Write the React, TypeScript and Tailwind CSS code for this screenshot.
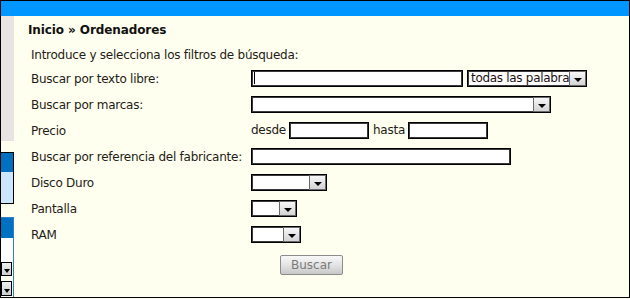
import React from "react";

const font = { fontFamily: '"DejaVu Sans", Tahoma, sans-serif' };

function Arrow() {
  return (
    <div className="h-full w-[17px] shrink-0 border border-[#6a6a6a] bg-gradient-to-b from-[#f7f7f7] to-[#d4d4d4] flex items-end justify-center pb-[3px]">
      <div className="w-0 h-0 border-l-[4px] border-r-[4px] border-t-[4px] border-l-transparent border-r-transparent border-t-black" />
    </div>
  );
}

function Select({ width, text }: { width: string; text?: string }) {
  return (
    <div className={`${width} h-[17px] bg-white border border-black shadow-[inset_0_0_0_1px_#3a3a3a] flex items-stretch`}>
      <div className="flex-1 min-w-0 whitespace-nowrap pl-[3px] leading-[15px] text-[12px] tracking-[-0.3px] text-[#221010]">
        {text}
      </div>
      <Arrow />
    </div>
  );
}

function TextBox({ width, caret }: { width: string; caret?: boolean }) {
  return (
    <div className={`${width} h-[17px] bg-white border border-black shadow-[inset_0_0_0_1px_#3a3a3a] flex items-center pl-[2px]`}>
      {caret && <div className="w-[1px] h-[12px] bg-black" />}
    </div>
  );
}

function Row({ label, children }: { label: string; children?: React.ReactNode }) {
  return (
    <div className="h-[26px] flex items-center">
      <div className="w-[237px] shrink-0 pl-[17px] pt-[1px]">{label}</div>
      <div className="flex items-center">{children}</div>
    </div>
  );
}

export default function App() {
  return (
    <div className="w-[630px] h-[299px] bg-[#fffff0]" style={font}>
      <div className="w-[630px] h-[298px] border border-black flex flex-col">
        <div className="h-[15px] bg-[#0096ff] shrink-0" />
        <div className="flex flex-1">
          {/* left sidebar fragment */}
          <div className="w-[13px] shrink-0 flex flex-col">
            <div className="h-[125px] bg-[#e8e4e4]" />
            <div className="h-[11px]" />
            <div className="h-[52px] border border-l-0 border-black flex flex-col">
              <div className="h-[19px] bg-[#0070c0]" />
              <div className="flex-1 bg-[#cce6fc]" />
            </div>
            <div className="h-[13px]" />
            <div className="flex-1 border-t border-r border-[#2f80c8] flex flex-col">
              <div className="h-[20px] bg-[#0070c0]" />
              <div className="h-[24px] bg-white" />
              <div className="h-[14px] w-[11px] border border-black bg-gradient-to-b from-[#f0f0f0] to-[#cfcfcf] flex items-end justify-center pb-[2px]">
                <div className="w-0 h-0 border-l-[3px] border-r-[3px] border-t-[4px] border-l-transparent border-r-transparent border-t-black" />
              </div>
              <div className="h-[5px]" />
              <div className="h-[15px] w-[11px] border border-black bg-gradient-to-b from-[#f0f0f0] to-[#cfcfcf] flex items-end justify-center pb-[2px]">
                <div className="w-0 h-0 border-l-[3px] border-r-[3px] border-t-[4px] border-l-transparent border-r-transparent border-t-black" />
              </div>
            </div>
          </div>

          {/* main panel */}
          <div className="flex-1 flex flex-col text-[12px] tracking-[-0.25px] text-[#241c16]">
            <div className="mt-[7px] h-[14px] leading-[14px] pl-[14px] font-bold tracking-[-0.1px] text-[#111]">
              Inicio » Ordenadores
            </div>
            <div className="mt-[11px] h-[14px] leading-[14px] pl-[17px]">
              Introduce y selecciona los filtros de búsqueda:
            </div>
            <div className="mt-[3px] flex flex-col">
              <Row label="Buscar por texto libre:">
                <TextBox width="w-[212px]" caret />
                <div className="w-[4px]" />
                <Select width="w-[120px]" text="todas las palabra" />
              </Row>
              <Row label="Buscar por marcas:">
                <Select width="w-[300px]" />
              </Row>
              <Row label="Precio">
                <span className="w-[38px]">desde</span>
                <TextBox width="w-[80px]" />
                <span className="w-[39px] pl-[4px]">hasta</span>
                <TextBox width="w-[80px]" />
              </Row>
              <Row label="Buscar por referencia del fabricante:">
                <TextBox width="w-[260px]" />
              </Row>
              <Row label="Disco Duro">
                <Select width="w-[76px]" />
              </Row>
              <Row label="Pantalla">
                <Select width="w-[46px]" />
              </Row>
              <Row label="RAM">
                <Select width="w-[50px]" />
              </Row>
            </div>
            <div className="mt-[8px] pl-[266px]">
              <button className="w-[63px] h-[20px] rounded-[2px] border border-[#8c8c8c] bg-gradient-to-b from-[#f8f8f8] via-[#e4e4e4] to-[#c8c8c8] text-[12px] tracking-normal text-[#7a7a7a]">
                Buscar
              </button>
            </div>
          </div>
        </div>
      </div>
    </div>
  );
}
